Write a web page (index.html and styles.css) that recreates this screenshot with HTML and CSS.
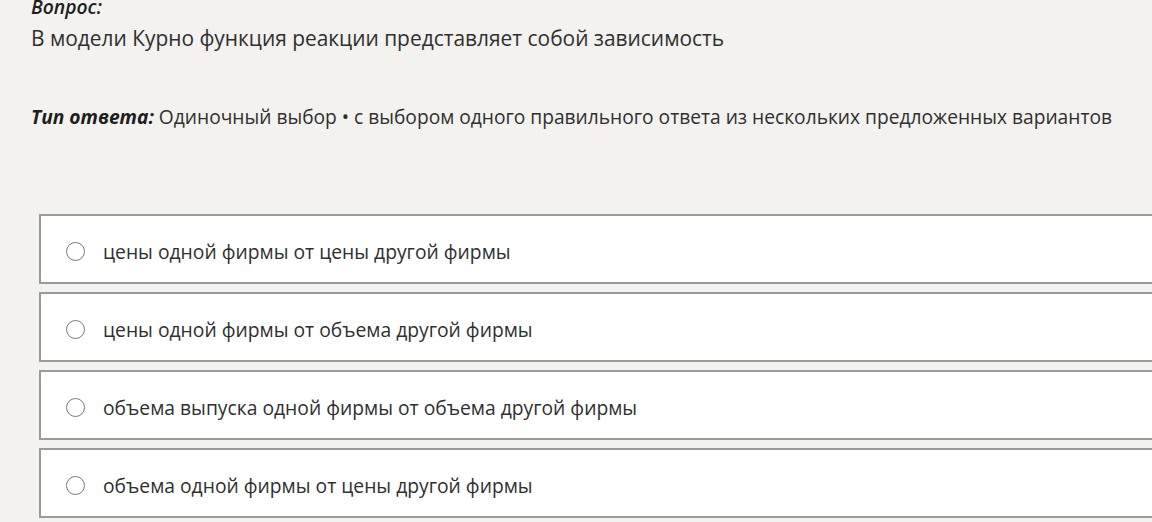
FILE: index.html
```html
<!DOCTYPE html>
<html lang="ru">
<head>
    <meta charset="UTF-8">
    <meta name="viewport" content="width=device-width, initial-scale=1.0">
    <title>Вопрос</title>
    <link rel="stylesheet" href="styles.css">
</head>
<body>

    <div class="question">
        <div class="question-label">Вопрос:</div>
        <div class="question-text">В модели Курно функция реакции представляет собой зависимость</div>

        <div class="answer-type"><span class="answer-type-label">Тип ответа:</span> Одиночный выбор • с выбором одного правильного ответа из нескольких предложенных вариантов</div>
    </div>

    <form class="options">
        <label class="option">
            <input type="radio" name="answer" value="1">
            <span class="radio"></span>
            <span class="option-text">цены одной фирмы от цены другой фирмы</span>
        </label>
        <label class="option">
            <input type="radio" name="answer" value="2">
            <span class="radio"></span>
            <span class="option-text">цены одной фирмы от объема другой фирмы</span>
        </label>
        <label class="option">
            <input type="radio" name="answer" value="3">
            <span class="radio"></span>
            <span class="option-text">объема выпуска одной фирмы от объема другой фирмы</span>
        </label>
        <label class="option">
            <input type="radio" name="answer" value="4">
            <span class="radio"></span>
            <span class="option-text">объема одной фирмы от цены другой фирмы</span>
        </label>
    </form>

</body>
</html>
```

FILE: styles.css
```css
body {
    font-family: "Open Sans", "Noto Sans", sans-serif;
    background-color: #f3f2ef;
    color: #2f2f2f;
    margin: 0;
    padding: 0 0 0 31px;
    font-size: 19.3px;
    overflow: hidden;
}

.question {
    margin-top: -6px;
}

.question-label {
    font-style: italic;
    font-weight: 600;
    line-height: 26px;
    color: #1e1e1e;
}

.question-text {
    font-size: 20.9px;
    line-height: 28px;
    margin-top: 4px;
}

.answer-type {
    font-size: 19.2px;
    line-height: 26px;
    margin-top: 52px;
}

.answer-type-label {
    font-style: italic;
    font-weight: 700;
    color: #1e1e1e;
}

.options {
    display: flex;
    flex-direction: column;
    gap: 8px;
    margin: 84px 0 0 8px;
}

.option {
    display: flex;
    align-items: center;
    background-color: #fff;
    border: 2px solid #9a9a98;
    border-right: none;
    padding: 5px 0 0 25px;
    height: 61px;
    cursor: pointer;
}

.option input {
    display: none;
}

.radio {
    width: 17px;
    height: 17px;
    border: 1.5px solid #7a7a7a;
    border-radius: 50%;
    margin-right: 18px;
}
```
